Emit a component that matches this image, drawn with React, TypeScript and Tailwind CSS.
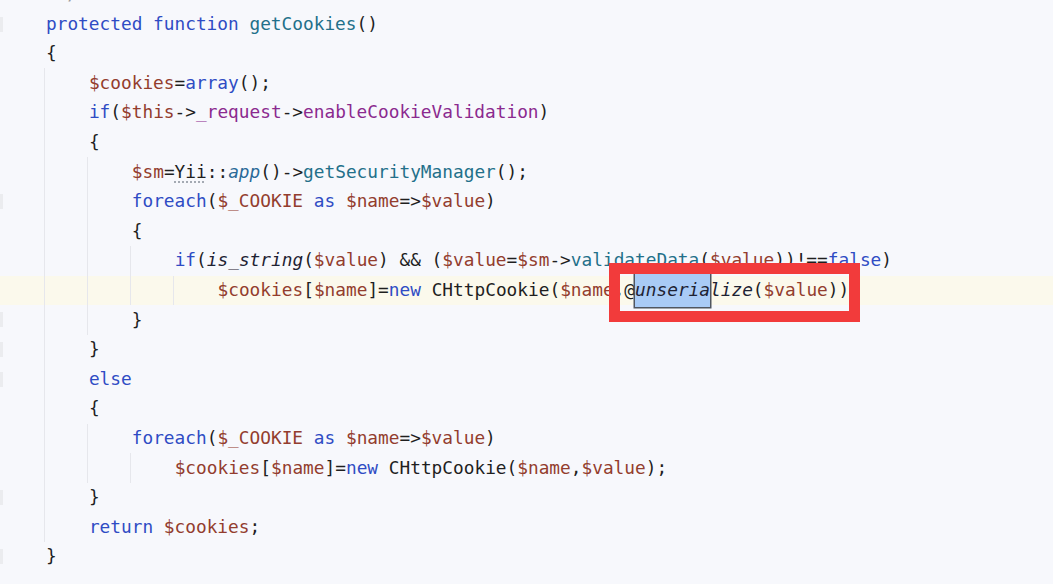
type Tok = [string, string?];

interface Line {
  indent: number;
  guides: number[];
  toks: Tok[];
  current?: boolean;
  fold?: boolean;
}

const C: Record<string, string> = {
  kw: 'text-[#2f4cc4]',
  v: 'text-[#933d2e]',
  fn: 'text-[#23708a]',
  f: 'text-[#8b2a8f]',
  it: 'italic text-[#1e2233]',
  app: 'italic text-[#2a6a98]',
  cm: 'text-[#9a9a9a]',
  p: 'text-[#1f1f1f]',
};

const lines: Line[] = [
  { indent: 0, guides: [], toks: [['protected', 'kw'], [' '], ['function', 'kw'], [' '], ['getCookies', 'fn'], ['()']], fold: true },
  { indent: 0, guides: [], toks: [['{']] },
  { indent: 1, guides: [0], toks: [['$cookies', 'v'], ['='], ['array', 'kw'], ['();']] },
  { indent: 1, guides: [0], toks: [['if', 'kw'], ['('], ['$this', 'v'], ['->'], ['_request', 'f'], ['->'], ['enableCookieValidation', 'f'], [')']] },
  { indent: 1, guides: [0], toks: [['{']] },
  { indent: 2, guides: [0, 1], toks: [['$sm', 'v'], ['='], ['Yii', 'yii'], ['::'], ['app', 'app'], ['()->'], ['getSecurityManager', 'fn'], ['();']] },
  { indent: 2, guides: [0, 1], toks: [['foreach', 'kw'], ['('], ['$_COOKIE', 'v'], [' '], ['as', 'kw'], [' '], ['$name', 'v'], ['=>'], ['$value', 'v'], [')']], fold: true },
  { indent: 2, guides: [0, 1], toks: [['{']] },
  { indent: 3, guides: [0, 1, 2], toks: [['if', 'kw'], ['('], ['is_string', 'it'], ['('], ['$value', 'v'], [') && ('], ['$value', 'v'], ['='], ['$sm', 'v'], ['->'], ['validateData', 'fn'], ['('], ['$value', 'v'], ['))!=='], ['false', 'kw'], [')']] },
  { indent: 4, guides: [0, 1, 2, 3], current: true, toks: [['$cookies', 'v'], ['['], ['$name', 'v'], [']='], ['new', 'kw'], [' CHttpCookie('], ['$name', 'v'], [',@'], ['unseria', 'sel'], ['lize', 'it'], ['('], ['$value', 'v'], ['));']] },
  { indent: 2, guides: [0, 1], toks: [['}']], fold: true },
  { indent: 1, guides: [0], toks: [['}']], fold: true },
  { indent: 1, guides: [0], toks: [['else', 'kw']], fold: true },
  { indent: 1, guides: [0], toks: [['{']] },
  { indent: 2, guides: [0, 1], toks: [['foreach', 'kw'], ['('], ['$_COOKIE', 'v'], [' '], ['as', 'kw'], [' '], ['$name', 'v'], ['=>'], ['$value', 'v'], [')']] },
  { indent: 3, guides: [0, 1, 2], toks: [['$cookies', 'v'], ['['], ['$name', 'v'], [']='], ['new', 'kw'], [' CHttpCookie('], ['$name', 'v'], [','], ['$value', 'v'], [');']] },
  { indent: 1, guides: [0], toks: [['}']], fold: true },
  { indent: 1, guides: [0], toks: [['return', 'kw'], [' '], ['$cookies', 'v'], [';']] },
  { indent: 0, guides: [], toks: [['}']], fold: true },
];

const Token = ({ t }: { t: Tok }) => {
  const [text, kind] = t;
  if (kind === 'sel') {
    return (
      <span className="italic text-[#1e2233] bg-[#a9cbf6] py-[3px] ring-[1.5px] ring-[#505660]">{text}</span>
    );
  }
  if (kind === 'yii') {
    return <span className="text-[#1f1f1f] underline decoration-dotted decoration-[#9aa0aa] underline-offset-4">{text}</span>;
  }
  return <span className={C[kind ?? 'p']}>{text}</span>;
};

const CodeLine = ({ line }: { line: Line }) => (
  <div className={`flex h-[29.6px] items-stretch ${line.current ? 'bg-[#fbf9ec]' : ''}`}>
    <div className="w-[44px] shrink-0 flex items-center">
      {line.fold && <div className="w-[3px] h-[15px] bg-[#ebecef]" />}
    </div>
    {Array.from({ length: line.indent }).map((_, i) => (
      <div
        key={i}
        className={`w-[42.88px] shrink-0 border-l ${line.guides.includes(i) ? 'border-[#e6e7ec]' : 'border-transparent'}`}
      />
    ))}
    <div className="ml-[2px] flex items-center whitespace-pre">
      {line.toks.map((t, i) => (
        <Token key={i} t={t} />
      ))}
    </div>
  </div>
);

export default function App() {
  return (
    <div className="relative w-[1053px] h-[584px] overflow-hidden bg-[#f7f8fc] text-[#1f1f1f] text-[17.8px] font-['DejaVu_Sans_Mono',monospace]">
      <div className="flex flex-col mt-[-20.4px]">
        <div className="flex h-[29.6px] items-center pl-[46px] whitespace-pre">
          <span className={C.cm}> */</span>
        </div>
        {lines.map((l, i) => (
          <CodeLine key={i} line={l} />
        ))}
      </div>
      {/* annotation box */}
      <div className="absolute left-[609px] top-[263px] w-[251px] h-[59px] border-[11px] border-[#f23b3b]" />
    </div>
  );
}
